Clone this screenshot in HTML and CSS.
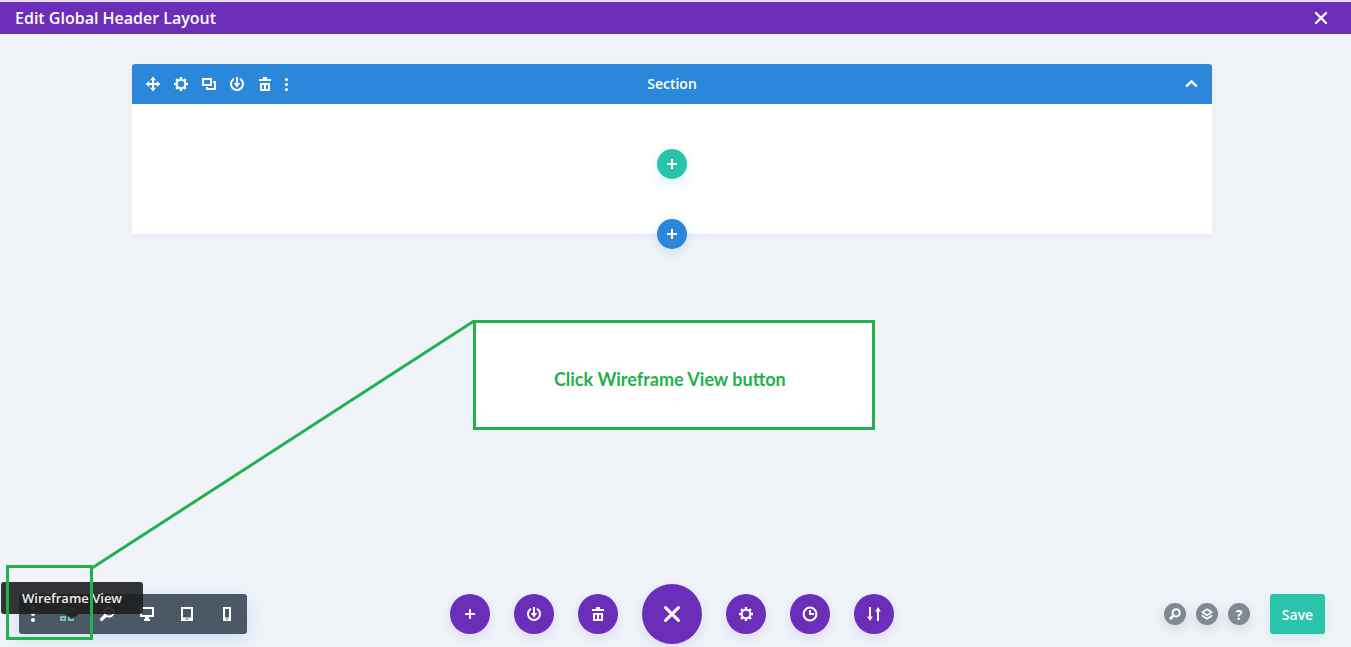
FILE: index.html
```
<!DOCTYPE html>
<html lang="en">

<head>
  <meta charset="UTF-8">
  <meta name="viewport" content="width=device-width, initial-scale=1.0">
  <title>Edit Global Header Layout</title>
  <link rel="stylesheet" href="styles.css">
</head>

<body>
  <!-- shared icons, all on a 28px grid -->
  <svg class="sprite" aria-hidden="true">
    <symbol id="i-plus" viewBox="0 0 28 28">
      <path d="M14 9v10M9 14h10" stroke="currentColor" stroke-width="2" />
    </symbol>
    <symbol id="i-close" viewBox="0 0 28 28">
      <path d="M9 9l10 10M19 9L9 19" stroke="currentColor" stroke-width="2.4" stroke-linecap="round" />
    </symbol>
    <symbol id="i-move" viewBox="0 0 28 28">
      <path d="M14 9v10M9 14h10" stroke="currentColor" stroke-width="2" />
      <path d="M14 6.600l3 3.600h-6zM14 21.400l3-3.600h-6zM6.600 14l3.600-3v6zM21.400 14l-3.600-3v6z" fill="currentColor" />
    </symbol>
    <symbol id="i-gear" viewBox="0 0 28 28">
      <circle cx="14" cy="14" r="4.3" fill="none" stroke="currentColor" stroke-width="2" />
      <path d="M14 7v2.6M14 18.4V21M7 14h2.6M18.4 14H21M9.1 9.1l1.8 1.8M17.1 17.1l1.8 1.8M18.9 9.1l-1.8 1.8M10.9 17.1l-1.8 1.8"
        stroke="currentColor" stroke-width="2.4" />
    </symbol>
    <symbol id="i-copy" viewBox="0 0 28 28">
      <path d="M8 9h8v6H8zM18 12h2v7h-8v-2" fill="none" stroke="currentColor" stroke-width="2" />
    </symbol>
    <symbol id="i-power" viewBox="0 0 28 28">
      <path d="M10.400 9.200a6 6 0 1 0 7.200 0" fill="none" stroke="currentColor" stroke-width="2" stroke-linecap="round" />
      <path d="M14 7v7" stroke="currentColor" stroke-width="2" />
      <path d="M10.800 13h6.400L14 17.400z" fill="currentColor" />
    </symbol>
    <symbol id="i-trash" viewBox="0 0 28 28">
      <path d="M12 7h4v2h4v2H8V9h4zM9 13h10v8H9zM11 15v4h2v-4zM15 15v4h2v-4z" fill="currentColor" fill-rule="evenodd" />
    </symbol>
    <symbol id="i-dots" viewBox="0 0 14 28">
      <g fill="currentColor">
        <circle cx="7.500" cy="9.500" r="1.600" />
        <circle cx="7.500" cy="14.500" r="1.600" />
        <circle cx="7.500" cy="19.500" r="1.600" />
      </g>
    </symbol>
    <symbol id="i-dots-big" viewBox="0 0 14 28">
      <g fill="currentColor">
        <circle cx="7" cy="8" r="2" />
        <circle cx="7" cy="14" r="2" />
        <circle cx="7" cy="20" r="2" />
      </g>
    </symbol>
    <symbol id="i-up" viewBox="0 0 28 28">
      <path d="M9.800 15.800L14.500 11.300l4.700 4.500" fill="none" stroke="currentColor" stroke-width="2.400" stroke-linecap="round" />
    </symbol>
    <symbol id="i-clock" viewBox="0 0 28 28">
      <circle cx="14" cy="14" r="6.4" fill="none" stroke="currentColor" stroke-width="2" />
      <path d="M14 10v4h4" fill="none" stroke="currentColor" stroke-width="2" />
    </symbol>
    <symbol id="i-sort" viewBox="0 0 28 28">
      <path d="M10 7v10M18 11v10" stroke="currentColor" stroke-width="2" />
      <path d="M7.200 16.600h5.600L10 21zM15.200 11.400h5.600L18 7z" fill="currentColor" />
    </symbol>
    <symbol id="i-wire" viewBox="0 0 28 28">
      <path d="M8 8h12v4H8zM8 17h4v3H8zM16 17h4v3h-4z" fill="none" stroke="currentColor" stroke-width="2" />
    </symbol>
    <symbol id="i-zoom" viewBox="0 0 28 28">
      <circle cx="16" cy="12" r="4.600" fill="none" stroke="currentColor" stroke-width="2" />
      <path d="M16 9.800v4.400M13.800 12h4.400" stroke="currentColor" />
      <path d="M12 16l-3.400 3.400" stroke="currentColor" stroke-width="3.400" stroke-linecap="round" />
    </symbol>
    <symbol id="i-search" viewBox="0 0 28 28">
      <circle cx="15.500" cy="12.500" r="4.600" fill="none" stroke="currentColor" stroke-width="2.500" />
      <path d="M12 16l-3.400 3.400" stroke="currentColor" stroke-width="3.400" stroke-linecap="round" />
    </symbol>
    <symbol id="i-desktop" viewBox="0 0 28 28">
      <path d="M8 8h12v8H8z" fill="none" stroke="currentColor" stroke-width="2" />
      <path d="M12 17h4v2h1v2h-6v-2h1z" fill="currentColor" />
    </symbol>
    <symbol id="i-tablet" viewBox="0 0 28 28">
      <path d="M8 7h12v14H8zM10 9v8.500h8V9zM12.500 18.500v1h3v-1z" fill="currentColor" fill-rule="evenodd" />
    </symbol>
    <symbol id="i-phone" viewBox="0 0 28 28">
      <path d="M10 7h8v14h-8zM12 9v8.500h4V9zM13 18.500v1h2v-1z" fill="currentColor" fill-rule="evenodd" />
    </symbol>
    <symbol id="i-layers" viewBox="0 0 28 28">
      <path d="M14 8l6 3.800-6 3.800-6-3.800zM8 16.200l6 3.800 6-3.800" fill="none" stroke="currentColor" stroke-width="2" stroke-linejoin="round" stroke-linecap="round" />
    </symbol>
  </svg>

  <header class="topbar">
    <h1>Edit Global Header Layout</h1>
    <button class="icon-btn" aria-label="Close"><svg class="icon"><use href="#i-close" /></svg></button>
  </header>

  <main class="canvas">
    <section class="section">
      <div class="section-head">
        <div class="section-tools">
          <button class="icon-btn" aria-label="Move section"><svg class="icon"><use href="#i-move" /></svg></button>
          <button class="icon-btn" aria-label="Section settings"><svg class="icon"><use href="#i-gear" /></svg></button>
          <button class="icon-btn" aria-label="Duplicate section"><svg class="icon"><use href="#i-copy" /></svg></button>
          <button class="icon-btn" aria-label="Save section to library"><svg class="icon"><use href="#i-power" /></svg></button>
          <button class="icon-btn" aria-label="Delete section"><svg class="icon"><use href="#i-trash" /></svg></button>
          <button class="icon-btn" aria-label="More options"><svg class="icon narrow"><use href="#i-dots" /></svg></button>
        </div>
        <h2>Section</h2>
        <button class="icon-btn collapse" aria-label="Collapse section"><svg class="icon"><use href="#i-up" /></svg></button>
      </div>
      <div class="section-body">
        <button class="add add-row" aria-label="Add row"><svg class="icon"><use href="#i-plus" /></svg></button>
      </div>
      <button class="add add-section" aria-label="Add section"><svg class="icon"><use href="#i-plus" /></svg></button>
    </section>

    <div class="callout">
      <p>Click Wireframe View button</p>
      <svg class="pointer" viewBox="0 0 382 249" aria-hidden="true">
        <path d="M0 248L382 1" stroke="currentColor" stroke-width="3" />
      </svg>
    </div>
  </main>

  <footer class="bottombar">
    <div class="views">
      <button class="view menu" aria-label="View options"><svg class="icon narrow"><use href="#i-dots-big" /></svg></button>
      <button class="view active" aria-labelledby="wireframe-tip"><svg class="icon"><use href="#i-wire" /></svg></button>
      <button class="view" aria-label="Zoom"><svg class="icon"><use href="#i-zoom" /></svg></button>
      <button class="view" aria-label="Desktop view"><svg class="icon"><use href="#i-desktop" /></svg></button>
      <button class="view" aria-label="Tablet view"><svg class="icon"><use href="#i-tablet" /></svg></button>
      <button class="view" aria-label="Phone view"><svg class="icon"><use href="#i-phone" /></svg></button>
      <span class="tooltip" id="wireframe-tip" role="tooltip">Wireframe View</span>
      <div class="highlight"></div>
    </div>

    <div class="actions">
      <button class="round" aria-label="Load from library"><svg class="icon"><use href="#i-plus" /></svg></button>
      <button class="round" aria-label="Save to library"><svg class="icon"><use href="#i-power" /></svg></button>
      <button class="round" aria-label="Clear layout"><svg class="icon"><use href="#i-trash" /></svg></button>
      <button class="round big" aria-label="Close menu"><svg class="icon"><use href="#i-close" /></svg></button>
      <button class="round" aria-label="Page settings"><svg class="icon"><use href="#i-gear" /></svg></button>
      <button class="round" aria-label="Editing history"><svg class="icon"><use href="#i-clock" /></svg></button>
      <button class="round" aria-label="Portability"><svg class="icon"><use href="#i-sort" /></svg></button>
    </div>

    <div class="finish">
      <button class="small" aria-label="Search"><svg class="icon"><use href="#i-search" /></svg></button>
      <button class="small" aria-label="Layers"><svg class="icon"><use href="#i-layers" /></svg></button>
      <button class="small" aria-label="Help">?</button>
      <button class="save">Save</button>
    </div>
  </footer>
</body>

</html>
```
FILE: styles.css
```
:root {
  --purple: #6c2eb9;
  --blue: #2b87da;
  --teal: #29c4a9;
  --slate: #4c5866;
  --grey: #7e8993;
  --note: #22b14c;
  --page: #f0f4f9;
}

* {
  box-sizing: border-box;
}

body {
  margin: 0;
  min-height: 100vh;
  display: flex;
  flex-direction: column;
  background: var(--page);
  color: #fff;
  font-family: "Open Sans", "Noto Sans", sans-serif;
  font-size: 14px;
}

h1,
h2,
p {
  margin: 0;
}

button {
  display: flex;
  align-items: center;
  justify-content: center;
  flex: none;
  margin: 0;
  padding: 0;
  border: 0;
  background: none;
  color: inherit;
  font: inherit;
  cursor: pointer;
}

.sprite {
  position: absolute;
  width: 0;
  height: 0;
}

.icon {
  display: block;
  flex: none;
  width: 28px;
  height: 28px;
}

.icon.narrow {
  width: 14px;
}

/* top bar */

.topbar {
  display: flex;
  align-items: center;
  justify-content: space-between;
  height: 34px;
  padding: 0 16px 0 15px;
  border-top: 2px solid #e4e4ee;
  background: var(--purple);
}

.topbar h1 {
  font-size: 16px;
  font-weight: 600;
  line-height: 32px;
}

/* canvas */

.canvas {
  position: relative;
  flex: 1;
  padding: 30px 7px 50px 0;
}

.section {
  position: relative;
  width: 90%;
  max-width: 1080px;
  margin: 0 auto;
  border-radius: 3px;
  background: #fff;
  box-shadow: 0 2px 6px rgba(43, 60, 80, 0.06);
}

.section-head {
  display: grid;
  grid-template-columns: 1fr auto 1fr;
  align-items: center;
  height: 40px;
  padding: 0 7px;
  border-radius: 3px 3px 0 0;
  background: var(--blue);
}

.section-tools {
  display: flex;
}

.section-head h2 {
  font-size: 14px;
  font-weight: 600;
  line-height: 20px;
}

.collapse {
  justify-self: end;
}

.section-body {
  display: flex;
  justify-content: center;
  height: 130px;
  padding-top: 45px;
}

.add {
  width: 30px;
  height: 30px;
  border-radius: 50%;
}

.add-row {
  background: var(--teal);
  box-shadow: 0 4px 12px rgba(41, 196, 169, 0.2);
}

.add-section {
  position: absolute;
  left: 50%;
  bottom: -15px;
  margin-left: -15px;
  background: var(--blue);
  box-shadow: 0 4px 12px rgba(43, 135, 218, 0.2);
}

/* note over the canvas, with a line to the view buttons */

.callout {
  position: absolute;
  top: 286px;
  left: 35%;
  display: flex;
  align-items: center;
  justify-content: center;
  width: 402px;
  height: 110px;
  padding: 8px 8px 0 0;
  border: 3px solid var(--note);
  background: #fff;
  color: var(--note);
  font-family: Lato, sans-serif;
  font-size: 18px;
  font-weight: 700;
  line-height: 24px;
}

.pointer {
  position: absolute;
  top: -3px;
  right: calc(100% + 2px);
  width: 382px;
  height: 249px;
  overflow: visible;
}

/* bottom bar */

.bottombar {
  display: grid;
  grid-template-columns: 1fr auto 1fr;
  align-items: center;
  padding: 0 26px 3px 19px;
}

.views {
  position: relative;
  display: flex;
  justify-self: start;
  border-radius: 3px;
  background: var(--slate);
  box-shadow: 0 5px 20px rgba(43, 135, 218, 0.2);
}

.view {
  width: 40px;
  height: 40px;
}

.view.menu {
  width: 28px;
}

.view.active {
  color: #70c3a9;
}

.tooltip {
  position: absolute;
  left: -18px;
  bottom: 20px;
  width: 142px;
  border-radius: 3px;
  background: rgba(30, 30, 30, 0.9);
  color: #eee;
  font-size: 13px;
  font-weight: 600;
  line-height: 32px;
  text-align: center;
}

.tooltip::after {
  content: "";
  position: absolute;
  top: 100%;
  left: 50%;
  margin-left: -7px;
  border: 7px solid transparent;
  border-top: 5px solid rgba(30, 30, 30, 0.9);
  border-bottom: 0;
}

.highlight {
  position: absolute;
  left: -13px;
  top: -29px;
  width: 87px;
  height: 75px;
  border: 3px solid var(--note);
  pointer-events: none;
}

.actions {
  display: flex;
  align-items: center;
  gap: 24px;
}

.round {
  width: 40px;
  height: 40px;
  border-radius: 50%;
  background: var(--purple);
  box-shadow: 0 4px 12px rgba(108, 46, 185, 0.15);
}

.round.big {
  width: 60px;
  height: 60px;
}

.round.big .icon {
  width: 36px;
  height: 36px;
}

.finish {
  display: flex;
  align-items: center;
  justify-self: end;
  gap: 10px;
}

.small {
  width: 22px;
  height: 22px;
  border-radius: 50%;
  background: var(--grey);
  box-shadow: 0 4px 12px rgba(76, 88, 102, 0.2);
  font-weight: 700;
}

.small .icon {
  width: 22px;
  height: 22px;
}

.save {
  width: 55px;
  height: 40px;
  margin-left: 10px;
  border-radius: 3px;
  background: var(--teal);
  box-shadow: 0 4px 12px rgba(41, 196, 169, 0.15);
  font-weight: 600;
}
```
